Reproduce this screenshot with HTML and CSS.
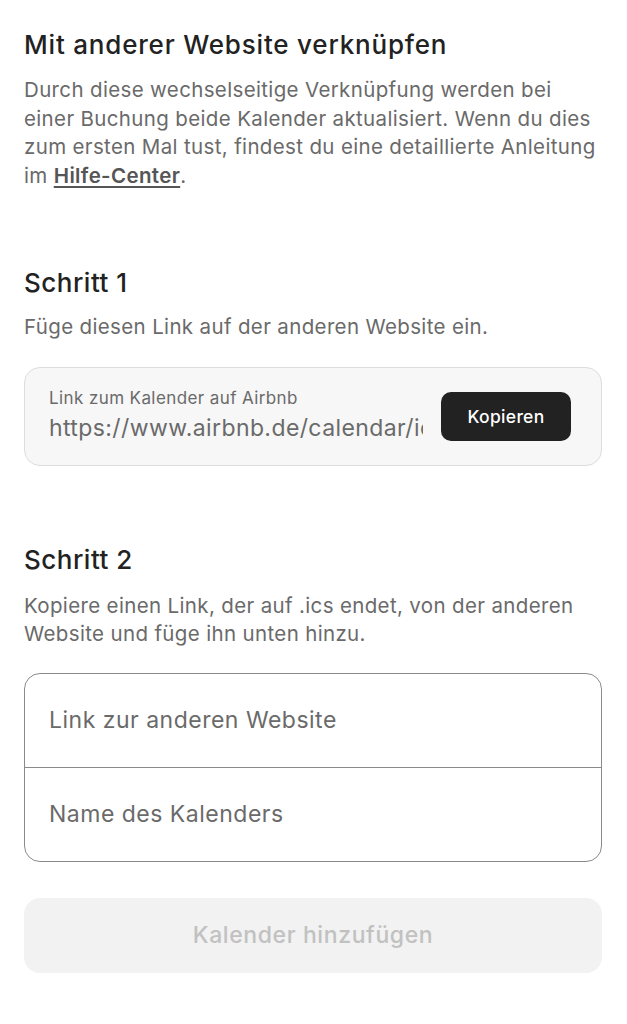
FILE: index.html
```html
<!DOCTYPE html>
<html lang="de">
<head>
<meta charset="utf-8">
<link rel="stylesheet" href="styles.css">
</head>
<body>
<main class="page">
  <section class="intro">
    <h1 class="title">Mit anderer Website verknüpfen</h1>
    <p class="text">Durch diese wechselseitige Verknüpfung werden bei einer Buchung beide Kalender aktualisiert. Wenn du dies zum ersten Mal tust, findest du eine detaillierte Anleitung im <a class="link" href="#">Hilfe-Center</a>.</p>
  </section>

  <section class="step step1">
    <h2 class="step-title">Schritt 1</h2>
    <p class="text">Füge diesen Link auf der anderen Website ein.</p>
    <div class="copy-box">
      <div class="copy-info">
        <div class="copy-label">Link zum Kalender auf Airbnb</div>
        <div class="copy-url">https://www.airbnb.de/calendar/ical/12345678.ics</div>
      </div>
      <button class="copy-btn">Kopieren</button>
    </div>
  </section>

  <section class="step step2">
    <h2 class="step-title">Schritt 2</h2>
    <p class="text">Kopiere einen Link, der auf .ics endet, von der anderen Website und füge ihn unten hinzu.</p>
    <div class="fields">
      <div class="field">Link zur anderen Website</div>
      <div class="field field-last">Name des Kalenders</div>
    </div>
    <button class="add-btn">Kalender hinzufügen</button>
  </section>
</main>
</body>
</html>
```

FILE: styles.css
```css
* { box-sizing: border-box; }
html, body { margin: 0; padding: 0; background: #fff; }
body {
  font-family: "Inter", "Noto Sans", "Liberation Sans", sans-serif;
  color: #222222;
}
.page {
  padding: 29px 25px 0 24px;
}
.title {
  margin: 0;
  font-size: 26px;
  font-weight: 500;
  line-height: 32px;
  letter-spacing: 0.8px;
}
.text {
  margin: 15px 0 0 0;
  font-size: 20.5px;
  line-height: 28.7px;
  color: #6a6a6a;
  letter-spacing: 0.35px;
}
.link {
  color: #555555;
  font-weight: 600;
  text-decoration: underline;
  text-underline-offset: 3px;
}
.step1 { margin-top: 76px; }
.step2 { margin-top: 78px; }
.step-title {
  margin: 0;
  font-size: 26px;
  font-weight: 500;
  line-height: 32px;
  letter-spacing: 0.5px;
}
.step1 .text { margin-top: 14px; }
.step2 .text { margin-top: 16px; }
.copy-box {
  margin-top: 25px;
  height: 99px;
  background: #f7f7f7;
  border: 1px solid #dddddd;
  border-radius: 16px;
  display: flex;
  align-items: center;
  padding: 0 30px 0 24px;
  gap: 18px;
}
.copy-info {
  flex: 1;
  min-width: 0;
}
.copy-label {
  font-size: 17px;
  line-height: 20px;
  color: #6a6a6a;
  letter-spacing: 0.4px;
  margin-top: -3px;
}
.copy-url {
  margin-top: 6px;
  font-size: 23px;
  line-height: 28px;
  color: #6a6a6a;
  letter-spacing: 0.4px;
  white-space: nowrap;
  overflow: hidden;
}
.copy-btn {
  flex: none;
  width: 130px;
  height: 49px;
  border: 0;
  border-radius: 10px;
  background: #222222;
  color: #ffffff;
  font-family: inherit;
  font-size: 17.5px;
  font-weight: 500;
  letter-spacing: 0.3px;
}
.fields {
  margin-top: 24px;
  border: 1.5px solid #8a8a8a;
  border-radius: 16px;
}
.field {
  height: 94px;
  display: flex;
  align-items: center;
  padding-left: 24px;
  font-size: 23px;
  letter-spacing: 0.5px;
  color: #6a6a6a;
  border-bottom: 1.5px solid #8a8a8a;
}
.field-last { border-bottom: 0; height: 93px; }
.add-btn {
  display: block;
  width: 100%;
  margin-top: 36px;
  height: 75px;
  border: 0;
  border-radius: 16px;
  background: #f2f2f2;
  color: #c1c1c1;
  font-family: inherit;
  font-size: 23px;
  font-weight: 500;
  letter-spacing: 0.6px;
}
```
